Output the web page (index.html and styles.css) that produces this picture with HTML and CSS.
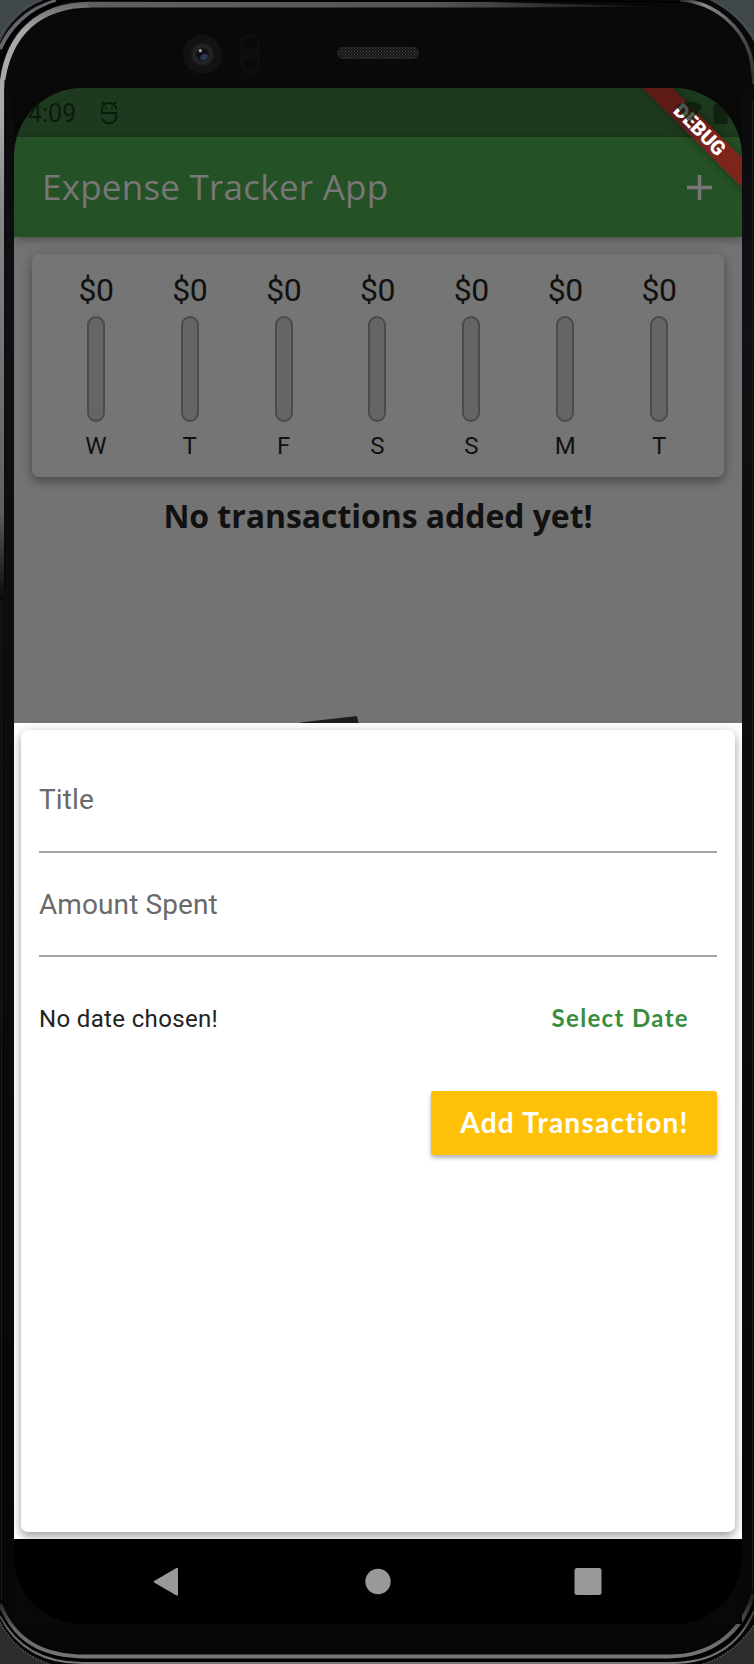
FILE: index.html
```
<!DOCTYPE html>
<html lang="en">
<head>
<meta charset="utf-8">
<title>Expense Tracker App</title>
<link rel="stylesheet" href="styles.css">
</head>
<body>
<div class="device">
  <svg class="frame" viewBox="0 0 754 1664" aria-hidden="true">
    <defs>
      <linearGradient id="backdrop" x1="0" y1="0" x2="0" y2="1"><stop offset="0" stop-color="#40474a"/><stop offset="1" stop-color="#2d2d2d"/></linearGradient>
      <linearGradient id="body" x1="0" y1="0" x2="0" y2="1"><stop offset="0" stop-color="#08080a"/><stop offset=".2" stop-color="#101016"/><stop offset=".3" stop-color="#100d0d"/><stop offset="1" stop-color="#060507"/></linearGradient>
      <linearGradient id="left-rail" gradientUnits="userSpaceOnUse" x1="0" y1="0" x2="0" y2="600"><stop offset="0" stop-color="#606060"/><stop offset=".05" stop-color="#a8a8a8"/><stop offset=".18" stop-color="#ababab"/><stop offset=".35" stop-color="#858887"/><stop offset=".85" stop-color="#5c605e"/><stop offset="1" stop-color="#080808"/></linearGradient>
      <linearGradient id="top-rail" gradientUnits="userSpaceOnUse" x1="80" y1="0" x2="670" y2="0"><stop offset="0" stop-color="#606060"/><stop offset=".6" stop-color="#555"/><stop offset="1" stop-color="#08080a"/></linearGradient>
      <linearGradient id="right-rail" gradientUnits="userSpaceOnUse" x1="680" y1="0" x2="754" y2="100"><stop offset="0" stop-color="#222"/><stop offset=".15" stop-color="#8a8a8a"/><stop offset=".5" stop-color="#505050"/><stop offset="1" stop-color="#242424"/></linearGradient>
      <linearGradient id="bottom-rail" gradientUnits="userSpaceOnUse" x1="0" y1="1600" x2="0" y2="1660"><stop offset="0" stop-color="#202020"/><stop offset=".5" stop-color="#666"/><stop offset="1" stop-color="#777"/></linearGradient>
      <radialGradient id="lens"><stop offset="0" stop-color="#080a11"/><stop offset=".35" stop-color="#0b0c14"/><stop offset=".7" stop-color="#272727"/><stop offset="1" stop-color="#141414"/></radialGradient>
      <pattern id="mesh" width="3" height="3" patternUnits="userSpaceOnUse"><rect width="3" height="3" fill="#151515"/><path d="M0 0h1v1H0zM1.500 1.500h1v1h-1z" fill="#484848"/></pattern>
    </defs>
    <rect width="754" height="1664" fill="url(#backdrop)"/>
    <path d="M43 0H710C730 10 745 25 754 42V1625C741 1644 725 1657 703 1664H50C27 1657 10 1642 0 1622V42C8 24 22 9 43 0Z" fill="url(#body)"/>
    <path d="M0 36C8 20 22 7 43 0M711 0C730 9 745 22 754 40M0 1622C10 1642 27 1657 50 1664M703 1664C725 1657 741 1644 754 1625" fill="none" stroke="#55585a" stroke-width="1.500" stroke-dasharray="1.500 1.500"/>
    <path d="M0 49C9 28 27 9 56 1" fill="none" stroke="#65666b" stroke-width="4"/>
    <path d="M0 64C7 37 24 12 60 2" fill="none" stroke="#000" stroke-width="3"/>
    <path d="M0 600V80C6 34 36 2 90 1.800V7.600C42 8 9 34 4.200 90V600Z" fill="url(#left-rail)"/>
    <path d="M88 1.800L490 2L665 6.500L490 7.600H88Z" fill="url(#top-rail)"/>
    <path d="M60 .5H540L690 2" fill="none" stroke="#000" stroke-width="1.500"/>
    <path d="M680 0C716 2 742 28 750 54Q753 66 754 84" fill="none" stroke="url(#right-rail)" stroke-width="3.500"/>
    <path d="M5 80V590" stroke="#020202"/>
    <path d="M1.500 600V1600M752.500 100V1590" stroke="#1a1a1d" stroke-width="1"/>
    <path d="M0 1616C16 1647 43 1663 82 1663H672C713 1663 740 1644 754 1611" fill="none" stroke="url(#bottom-rail)" stroke-width="2"/>
    <path d="M0 1604C14 1641 43 1656.500 86 1656.500H668C710 1656.500 742 1634 753 1594" fill="none" stroke="url(#bottom-rail)" stroke-width="4"/>
    <path d="M0 1611C16 1645 43 1660 88 1660H668C710 1660 740 1640 754 1604" fill="none" stroke="#000" stroke-width="2"/>
    <circle cx="202.500" cy="54.500" r="19.500" fill="#121212"/>
    <circle cx="202.500" cy="54.500" r="12" fill="url(#lens)"/>
    <ellipse cx="204" cy="57" rx="4" ry="3" fill="#2c3551" transform="rotate(-35 204 57)"/>
    <circle cx="200.300" cy="50.800" r="1.700" fill="#a0a0a0"/>
    <rect x="241" y="35" width="18" height="38" rx="8" fill="#0e0e10" stroke="#121213"/>
    <circle cx="250" cy="43" r="6.500" fill="#09090b"/><circle cx="250" cy="64" r="6.500" fill="#09090b"/>
    <rect x="337.500" y="47.500" width="81" height="11" rx="5.500" fill="url(#mesh)" stroke="#242424"/>
    <path d="M14 88H742V1624H14Z" fill="#0a0806"/>
  </svg>

  <main class="screen">
    <div class="status">
      <span class="clock">4:09</span>
      <svg class="bug" viewBox="0 0 18 24"><path d="M2 1l2.500 3M16 1l-2.500 3M1.700 12V8.500a7.300 6.500 0 0 1 14.600 0M.7 12H16.300v3.500a7.300 7 0 0 1-14.400 1.500" fill="none" stroke="currentColor" stroke-width="2"/><circle cx="6" cy="7.500" r="1"/><circle cx="12" cy="7.500" r="1"/></svg>
      <svg class="signal" viewBox="0 0 53 24"><path d="M0 5Q13.500-4 27 5L13.500 22Z" fill="currentColor"/><rect x="37.500" y="3" width="14" height="20" rx="1.500" fill="currentColor"/></svg>
    </div>
    <header class="appbar">
      <h1 class="app-title">Expense Tracker App</h1>
      <svg class="add" viewBox="0 0 26 26"><path d="M13 0V26M0 13H26" stroke="currentColor" stroke-width="3.700"/></svg>
    </header>
    <section class="backdrop">
      <div class="chart">
        <div class="day"><span class="sum">$0</span><i class="bar"></i><span class="name">W</span></div>
        <div class="day"><span class="sum">$0</span><i class="bar"></i><span class="name">T</span></div>
        <div class="day"><span class="sum">$0</span><i class="bar"></i><span class="name">F</span></div>
        <div class="day"><span class="sum">$0</span><i class="bar"></i><span class="name">S</span></div>
        <div class="day"><span class="sum">$0</span><i class="bar"></i><span class="name">S</span></div>
        <div class="day"><span class="sum">$0</span><i class="bar"></i><span class="name">M</span></div>
        <div class="day"><span class="sum">$0</span><i class="bar"></i><span class="name">T</span></div>
      </div>
      <p class="empty">No transactions added yet!</p>
      <svg class="art" viewBox="0 0 60 8"><path d="M0 7.500L57 1L58.500 8H0Z" fill="#1d1d1d"/></svg>
    </section>
    <section class="sheet">
      <form class="card">
        <label class="field">Title</label>
        <label class="field amount">Amount Spent</label>
        <div class="date-row"><span class="date">No date chosen!</span><span class="select">Select Date</span></div>
        <button class="submit" type="button"><span>Add Transaction!</span></button>
      </form>
    </section>
    <nav class="navbar">
      <svg class="nav-icons" viewBox="0 0 728 85"><path d="M141 41.500L162 29.200Q164 28 164 30V55Q164 57.500 162 56.200L141 44Q138.500 42.700 141 41.500Z"/><circle cx="364" cy="42.500" r="12.700"/><rect x="560.500" y="29" width="27" height="27" rx="2.500"/></svg>
    </nav>
    <div class="debug"><span>DEBUG</span></div>
  </main>
</div>
</body>
</html>
```
FILE: styles.css
```
* { box-sizing: border-box; }
body { margin: 0; font-family: Roboto, sans-serif; }
.device { position: relative; width: 754px; height: 1664px; padding: 88px 12px 40px 14px; overflow: hidden; }
.frame { position: absolute; inset: 0; width: 754px; height: 1664px; }
.screen { position: relative; width: 728px; height: 1536px; display: flex; flex-direction: column; overflow: hidden; border-radius: 68px; background: #000; }

.status { height: 49px; flex: none; display: flex; align-items: center; padding: 0 13px 0 14px; background: #1e3a1e; color: #0b1b0c; }
.clock { font-size: 25px; line-height: 30px; width: 72px; padding-top: 3px; }
.bug { width: 18px; height: 24px; fill: currentColor; }
.signal { position: relative; z-index: 3; width: 53px; height: 24px; margin-left: auto; opacity: .72; }
.appbar { position: relative; z-index: 1; height: 100px; flex: none; display: flex; align-items: center; justify-content: space-between; padding: 0 30px 0 28px; background: #255127; color: #777; box-shadow: 0 2px 9px rgba(0,0,0,.35); }
.app-title { margin: 0; font: 400 35px/48px "Open Sans", sans-serif; letter-spacing: .23px; white-space: nowrap; }
.add { width: 25px; height: 25px; }

.backdrop { height: 486px; flex: none; display: flex; flex-direction: column; align-items: center; padding-top: 17px; background: #737373; color: #111; }
.chart { width: 692px; height: 223px; flex: none; display: grid; grid-template-columns: repeat(7, 1fr); padding: 17px 18px 0 17px; border-radius: 7px; background: #757575; box-shadow: 0 5px 10px rgba(0,0,0,.28), 0 1px 14px rgba(0,0,0,.12); }
.day { display: flex; flex-direction: column; align-items: center; }
.sum { font-size: 32px; line-height: 39px; height: 45px; letter-spacing: -.5px; }
.bar { width: 18px; height: 106px; flex: none; border: 2px solid #4b4b4b; border-radius: 9px; background: #656565; }
.name { font-size: 24px; line-height: 28px; margin-top: 10px; }
.empty { margin: 17px 0 0; font: 700 32px/44px "Open Sans", sans-serif; letter-spacing: -.06px; white-space: nowrap; }
.art { width: 60px; height: 8px; margin-top: auto; margin-right: 96px; }

.sheet { height: 816px; flex: none; padding: 7px; overflow: hidden; background: #fff; }
.card { height: 802px; display: flex; flex-direction: column; padding: 18px; border-radius: 7px; background: #fff; box-shadow: 0 5px 9px rgba(0,0,0,.28), 0 1px 12px rgba(0,0,0,.15); }
.field { height: 105px; flex: none; padding-top: 35px; border-bottom: 2px solid #a5a5a5; font-size: 28px; line-height: 34px; letter-spacing: .1px; color: #6a6a6a; }
.amount { height: 104px; }
.date-row { display: flex; justify-content: space-between; align-items: center; height: 124px; padding-right: 28px; }
.date { font-size: 24px; color: #222; letter-spacing: .35px; }
.select { font: 700 24px/30px Lato, sans-serif; color: #388e3c; letter-spacing: 1.35px; padding-bottom: 2px; }
.submit { align-self: flex-end; width: 286px; height: 64px; margin-top: 10px; padding: 0 0 2px 1px; border: 0; border-radius: 3px; background: #ffc107; color: #fff; font: 700 28px/36px Lato, sans-serif; font-variant-ligatures: none; letter-spacing: 1.25px; box-shadow: 0 3px 4px rgba(0,0,0,.3); }

.navbar { height: 85px; flex: none; background: #000; }
.nav-icons { display: block; width: 728px; height: 85px; fill: #999; }
.debug { position: absolute; z-index: 2; right: -59.5px; top: 29px; width: 210px; height: 21px; padding-left: 7px; display: flex; align-items: center; justify-content: center; transform: rotate(45deg); background: linear-gradient(90deg, #5f1b16 0 45%, #7d241b 58%); box-shadow: 0 0 9px rgba(0,0,0,.4); color: #fff; font: 900 20px/21px Roboto, sans-serif; }
```
